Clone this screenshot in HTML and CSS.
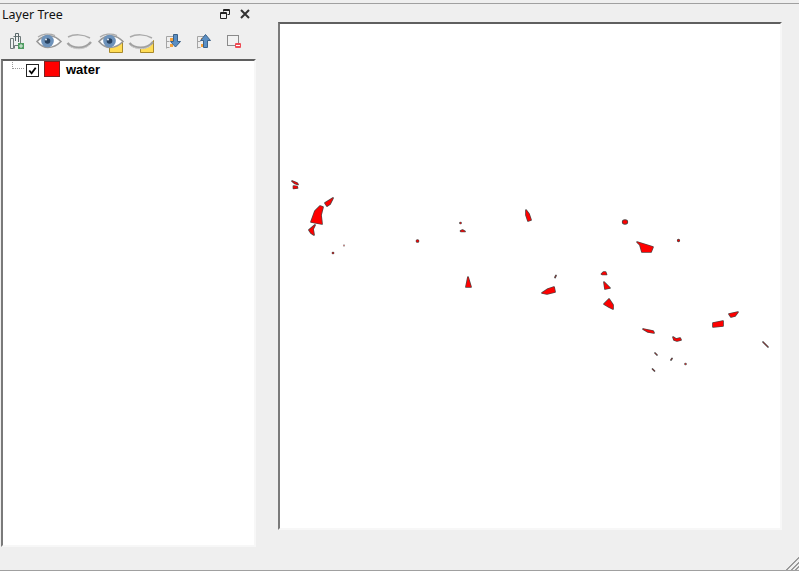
FILE: index.html
```html
<!DOCTYPE html>
<html lang="en">
<head>
<meta charset="utf-8">
<title>Layer Tree</title>
<link rel="stylesheet" href="styles.css">
</head>
<body>
<div class="window">
  <div class="content">
    <aside class="dock">
      <header class="dock-title">
        <span class="dock-name">Layer Tree</span>
        <span class="dock-buttons">
          <svg class="dock-btn" viewBox="0 0 10 10" width="10" height="10"><path d="M3.500 .5h6v5h-2M3.500 .5v2M3.500 1.500h6M.5 3.500h6v6h-6zM.5 4.500h6" fill="none" stroke="#222"/></svg>
          <svg class="dock-btn" viewBox="0 0 10 10" width="10" height="10"><path d="M1 1l8 8M9 1l-8 8" fill="none" stroke="#333" stroke-width="2"/></svg>
        </span>
      </header>
      <div class="toolbar">
        <svg class="tool" viewBox="0 0 31 20" width="31" height="20"><path d="M8.500 5.500h3v10h-3zM11.500 3.500h7v9h-6v3" fill="#eef1f1" stroke="#6f7a7a"/><path d="M13.500 8V.5h3V9" fill="none" stroke="#59686b"/><rect x="16" y="10" width="6" height="6" fill="#4f9c62"/><path d="M19 11v4M17 13h4" stroke="#dff0e2"/></svg>
        <svg class="tool" viewBox="0 0 31 20" width="31" height="20"><use href="#eye"/></svg>
        <svg class="tool" viewBox="0 0 31 20" width="31" height="20"><use href="#eye-closed"/></svg>
        <svg class="tool" viewBox="0 0 31 20" width="31" height="20"><use href="#note"/><use href="#eye"/></svg>
        <svg class="tool" viewBox="0 0 31 20" width="31" height="20"><use href="#note-low"/><use href="#eye-closed"/></svg>
        <svg class="tool" viewBox="0 0 31 20" width="31" height="20"><use href="#tree"/><path d="M16.500 1.500h4v7h3l-5 5.500-5-5.500h3z" fill="#5b8fc4" stroke="#3c6187"/></svg>
        <svg class="tool" viewBox="0 0 31 20" width="31" height="20"><use href="#tree"/><path d="M15.500 14.500h4v-7h3l-5-6-5 6h3z" fill="#5b8fc4" stroke="#3c6187"/></svg>
        <svg class="tool" viewBox="0 0 31 20" width="31" height="20"><rect x="8.500" y="2.500" width="11" height="10" fill="#f2f2f2" stroke="#8a8a8a"/><rect x="16" y="10" width="6" height="5" rx="1" fill="#ee4c55"/><path d="M17 12.500h4" stroke="#fff"/></svg>
      </div>
      <div class="tree">
        <div class="tree-row">
          <span class="branch"></span>
          <span class="check"><svg viewBox="0 0 12 12" width="12" height="12"><path d="M2.500 6l2.500 3 4.500-6" fill="none" stroke="#000" stroke-width="2"/></svg></span>
          <span class="swatch"></span>
          <span class="layer-name">water</span>
        </div>
      </div>
    </aside>
    <main class="map">
      <svg class="map-canvas" viewBox="280 24 501 505" width="501" height="505">
        <defs>
          <g id="shapes">
            <path d="M292 181l5 2 1 1.500-3-1zM293.500 186l3.500.5.500 1.500-4 .5z"/>
            <path d="M325 203l8-5-3 6-3 2z"/>
            <path d="M311 222l4-11 5-5 3 1-2 8 1 9z"/>
            <path d="M309 230l6-5-2 4 1 6-3-2z"/>
            <path d="M468 277l3 10h-5l1-5z"/>
            <path d="M526 210l3 4 2 6-3 1-2-6z"/>
            <ellipse cx="625" cy="222" rx="2.300" ry="1.800"/>
            <path d="M542 293l6-4 6-2 1 5-8 2z"/>
            <path d="M601.500 274l2-2h2l1 2.500h-4z"/>
            <path d="M604 282l6 6-5 1z"/>
            <path d="M609 299l4 6v4l-4-2-5-3z"/>
            <path d="M637 242l16 5-2 5h-9l-2-7z"/>
            <circle cx="678.500" cy="240.500" r=".8"/>
            <circle cx="417.500" cy="241" r="1"/>
            <circle cx="460.500" cy="223" r=".5"/>
            <path d="M460.500 231l2-1 2.500 1.500h-4z"/>
            <path d="M643 329l10 2 1 2-6-1z"/>
            <path d="M673 337l3 2 4-1 1 2-4 1-3-1z"/>
            <path d="M713 323l10-2v5l-10 1z"/>
            <path d="M729 314l9-2-3 4-4 1z"/>
            <path d="M763 342l5 5M655 353l2 2M671 360l1-1.500M652.500 369l2 2"/>
            <circle cx="685.500" cy="364" r=".4"/>
            <circle cx="344" cy="245.500" r=".2"/>
            <circle cx="333" cy="253" r=".5"/>
            <path d="M555 277.500l1-2"/>
          </g>
        </defs>
        <use href="#shapes" class="shape-outline"/>
        <use href="#shapes" class="shape-fill"/>
      </svg>
    </main>
  </div>
  <div class="grip"></div>
</div>
<svg class="defs" width="0" height="0">
  <defs>
    <g id="eye">
      <path d="M4 8.500C8 4 13 2.500 18 3c4 .5 7 2.500 10 5.500-4 4-8 6-13 6-4 0-8-2.500-11-6z" fill="#fff" stroke="#999" stroke-width="1.600"/>
      <path d="M5 4c4-3 11-4 17-1.500" fill="none" stroke="#aaa" stroke-width="1.200"/>
      <circle cx="14.500" cy="8" r="6.300" fill="#6e93bb"/>
      <circle cx="14.500" cy="8" r="2.800" fill="#28415f"/>
      <circle cx="13" cy="6.500" r="1" fill="#e8eef5"/>
    </g>
    <g id="eye-closed">
      <path d="M3.500 10c5 6 17 7 23.500-1" fill="none" stroke="#a0a0a0" stroke-width="2.400"/>
      <path d="M4 4c6-3 15-3 22 1" fill="none" stroke="#aaa" stroke-width="1.500"/>
      <path d="M5 13c6 3.500 14 4 20-.5" fill="none" stroke="#ccc"/>
    </g>
    <g id="note">
      <path d="M14.500 7.500h13v12h-13z" fill="#ffdc55" stroke="#a8892a"/>
    </g>
    <g id="note-low">
      <path d="M27.500 7.500v12h-13v-4c6 0 11-3 13-8z" fill="#ffdc55" stroke="#a8892a"/>
    </g>
    <g id="tree">
      <path d="M9.500 3.500h8M9.500 3.500v12M9.500 8.500h3M9.500 14.500h3" fill="none" stroke="#a5a5a5"/>
      <rect x="13" y="5" width="3" height="3" fill="#f7a33a"/>
      <rect x="13" y="11" width="3" height="3" fill="#f7a33a"/>
    </g>
  </defs>
</svg>
</body>
</html>
```
FILE: styles.css
```css
* { box-sizing: border-box; }
html, body { margin: 0; padding: 0; }
body { width: 799px; height: 571px; overflow: hidden; background: #efefef; font-family: "Noto Sans", sans-serif; }
.window { width: 799px; height: 568px; margin-top: 3px; position: relative; display: flex; flex-direction: column; border-top: 1px solid #a0a0a0; border-bottom: 1px solid #a0a0a0; }
.content { display: flex; align-items: flex-start; padding-left: 1px; }
.dock { width: 255px; display: flex; flex-direction: column; }
.dock-title { height: 20px; display: flex; align-items: center; justify-content: space-between; padding: 0 6px 0 1px; }
.dock-name { font-size: 12.500px; color: #111; }
.dock-buttons { display: flex; gap: 10px; align-items: center; }
.dock-btn { display: block; }
.toolbar { height: 35px; display: flex; align-items: center; padding: 3px 0 0 1px; }
.tool { display: block; flex: none; }
.tree { height: 488px; background: #fff; border-top: 2px solid #5f5f5f; border-left: 2px solid #7a7a7a; border-right: 2px solid #f7f7f7; border-bottom: 2px solid #f7f7f7; }
.tree-row { height: 16px; display: flex; align-items: flex-start; position: relative; padding-left: 23px; }
.branch { position: absolute; left: 9px; top: 1px; width: 12px; height: 7px; border-left: 1px dotted #9a9a9a; border-bottom: 1px dotted #9a9a9a; }
.check { width: 13px; height: 13px; margin-top: 3px; border: 1px solid #222; background: #fff; display: flex; align-items: center; justify-content: center; flex: none; }
.check svg { display: block; width: 11px; height: 11px; }
.swatch { width: 16px; height: 16px; background: #ff0000; border: 1px solid #7a2222; margin-left: 5px; flex: none; }
.layer-name { font: bold 13px/17px "Liberation Sans", sans-serif; color: #000; margin-left: 6px; }
.map { width: 504px; height: 508px; margin: 18px 0 0 22px; background: #fff; border-top: 2px solid #5f5f5f; border-left: 2px solid #7a7a7a; border-right: 2px solid #f7f7f7; border-bottom: 2px solid #f7f7f7; }
.map-canvas { display: block; }
.shape-outline { fill: #4a4a4a; stroke: #4a4a4a; stroke-width: 1.700; stroke-linejoin: round; stroke-linecap: round; }
.shape-fill { fill: #ff0000; stroke: #ff0000; stroke-width: .3; stroke-linejoin: round; }
.grip { position: absolute; right: 0; bottom: 0; width: 14px; height: 14px; background: repeating-linear-gradient(135deg, #efefef 0 1.500px, #9a9a9a 1.500px 3px); clip-path: polygon(100% 0, 100% 100%, 0 100%); }
.defs { position: absolute; }
```
